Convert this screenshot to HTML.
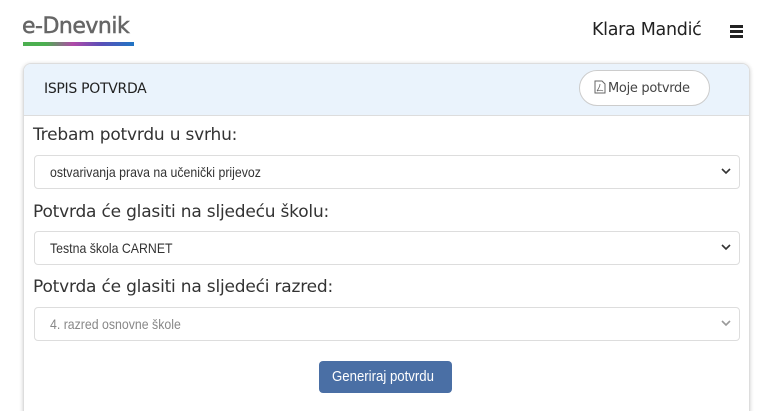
<!DOCTYPE html>
<html><head><meta charset="utf-8"><style>
*{box-sizing:border-box;margin:0;padding:0}
html,body{width:775px;height:411px;overflow:hidden}
body{background:#fff;font-family:"Liberation Sans",sans-serif;position:relative;color:#222}
.logo{position:absolute;left:22px;top:14px;font-family:"DejaVu Sans",sans-serif;font-size:22px;color:#666;letter-spacing:-0.5px;-webkit-text-stroke:0.5px #666}
.bar{position:absolute;left:23px;top:42px;width:111px;height:4px;background:linear-gradient(90deg,#4caf50 0%,#4caf50 20%,#b04aa8 45%,#5b4fb8 70%,#1f75c4 100%)}
.user{position:absolute;left:592px;top:20px;font-family:"DejaVu Sans",sans-serif;font-size:17.5px;color:#222;letter-spacing:-0.3px}
.menu{position:absolute;left:730px;top:25px;width:13px}
.menu i{display:block;height:2.5px;background:#222;margin-bottom:2.5px}
.card{position:absolute;left:23px;top:63px;width:727px;height:360px;border:1px solid #ddd;border-radius:8px;box-shadow:0 1px 4px rgba(0,0,0,.2);overflow:hidden}
.head{height:52px;background:#eaf3fc;border-bottom:1px solid #ddd;position:relative}
.head .t{position:absolute;left:20px;top:17px;font-family:"DejaVu Sans",sans-serif;font-size:14px;color:#222;letter-spacing:-0.3px}
.btn2{position:absolute;left:555px;top:6px;width:131px;height:36px;border:1px solid #ccc;border-radius:18px;background:#fff;font-family:"DejaVu Sans",sans-serif;font-size:13px;color:#444;padding:9px 0 0 14px;letter-spacing:-0.3px;white-space:nowrap}
.lab{position:absolute;left:33px;font-family:"DejaVu Sans",sans-serif;font-size:17px;color:#333;letter-spacing:-0.2px}
.sel{position:absolute;left:34px;width:706px;height:34px;border:1px solid #ddd;border-radius:4px;font-size:14px;color:#333;padding:8px 0 0 15px}
.sel span,.go span{display:inline-block;transform:scaleX(.88);transform-origin:left}
.sel svg{position:absolute;right:8px;top:12px}
.go{position:absolute;left:319px;top:361px;width:133px;height:32px;background:#4a6fa5;border-radius:4px;color:#fff;font-size:15px;padding:7px 0 0 13px;white-space:nowrap}
</style></head><body>
<div class="logo">e-Dnevnik</div><div class="bar"></div>
<div class="user">Klara Mandić</div>
<div class="menu"><i></i><i></i><i></i></div>
<div class="card"><div class="head"><div class="t">ISPIS POTVRDA</div>
<div class="btn2"><svg width="12" height="14" viewBox="0 0 12 14" style="vertical-align:-2px;margin-right:2px"><path d="M1 1h7l3 3v9H1z" fill="none" stroke="#666"/><path d="M3 11c2-3 3-5 3-7M3 11c3-1 5-1 6 0" fill="none" stroke="#666" stroke-width=".8"/></svg>Moje potvrde</div></div></div>
<div class="lab" style="top:125px">Trebam potvrdu u svrhu:</div>
<div class="sel" style="top:155px"><span>ostvarivanja prava na učenički prijevoz</span><svg width="10" height="7"><path d="M1 1l4 4 4-4" fill="none" stroke="#333" stroke-width="1.6"/></svg></div>
<div class="lab" style="top:202px">Potvrda će glasiti na sljedeću školu:</div>
<div class="sel" style="top:231px"><span>Testna škola CARNET</span><svg width="10" height="7"><path d="M1 1l4 4 4-4" fill="none" stroke="#333" stroke-width="1.6"/></svg></div>
<div class="lab" style="top:277px">Potvrda će glasiti na sljedeći razred:</div>
<div class="sel" style="top:307px;color:#888"><span>4. razred osnovne škole</span><svg width="10" height="7"><path d="M1 1l4 4 4-4" fill="none" stroke="#999" stroke-width="1.6"/></svg></div>
<div class="go"><span>Generiraj potvrdu</span></div>
</body></html>
